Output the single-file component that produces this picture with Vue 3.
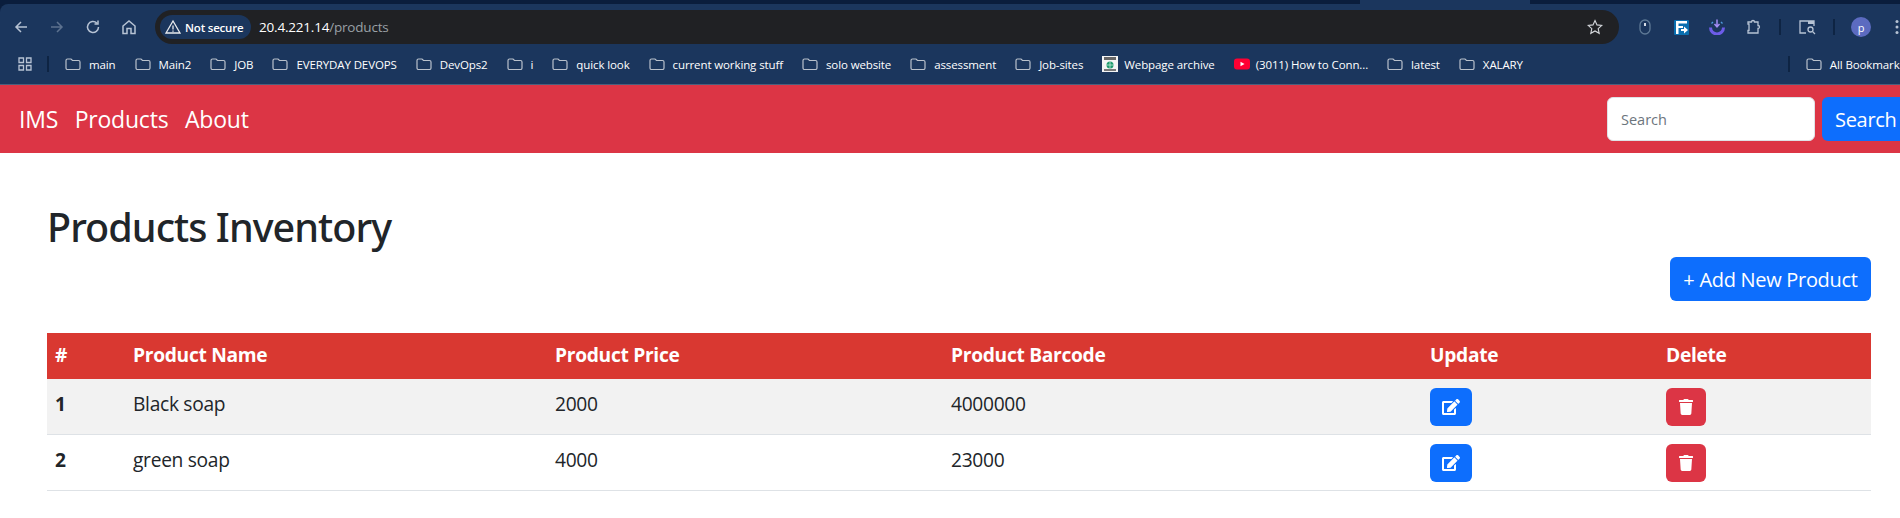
<template>
  <div class="page">
    <div class="chrome">
      <div class="tabstrip">
        <span class="active-tab"></span>
      </div>
      <div class="toolbar">
        <svg class="tb-icon back" viewBox="0 0 16 16"><path d="M14 8H3M8 3 3 8l5 5" /></svg>
        <svg class="tb-icon forward" viewBox="0 0 16 16"><path d="M2 8h11M8 3l5 5-5 5" /></svg>
        <svg class="tb-icon reload" viewBox="0 0 16 16"><path d="M13.500 8A5.500 5.500 0 1 1 11.800 4M13 1.500V5H9.500" /></svg>
        <svg class="tb-icon home" viewBox="0 0 16 16"><path d="M2 7l6-5 6 5v7.500h-4v-5H6v5H2z" /></svg>
        <div class="omnibox">
          <div class="secure">
            <svg class="warn" viewBox="0 0 16 16"><path d="M8 2 1 14h14zM8 6.500v4M8 11.500v1.200" /></svg>
            <span>Not secure</span>
          </div>
          <span class="host">20.4.221.14</span><span class="path">/products</span>
          <svg class="star" viewBox="0 0 16 16"><path d="m8 1.500 2 4.400 4.800.5-3.600 3.200 1 4.700L8 11.900l-4.200 2.400 1-4.700L1.200 6.400 6 5.900z" /></svg>
        </div>
        <div class="extensions">
          <svg class="ext mouse" viewBox="0 0 12 16"><rect x="1" y="1" width="10" height="14" rx="5" /><path class="mouse-dot" d="M6 4v3" /></svg>
          <svg class="ext flag" viewBox="0 0 15 15"><rect width="15" height="15" rx="1" fill="#0a6fb0" /><path d="M2 1h11v2.500H4.500V6H9v2H4.500v6H2z" fill="#fff" /><path d="M7 9h3V6.500l4 3.500-4 3.500V11H7z" fill="#fff" /></svg>
          <svg class="ext power" viewBox="0 0 16 16"><path class="power-ring" d="M1.500 8.500a6.500 6.500 0 0 0 13 0" /><path class="power-arrow" d="M8 .5v7M5.500 5 8 7.800 10.500 5" /><path class="power-top" d="M2.500 4.500 4 3M13.500 4.500 12 3" /></svg>
          <svg class="ext puzzle" viewBox="0 0 16 16"><path d="M2 3h3.500a1.500 1.500 0 0 1 3 0H12v3.500a1.500 1.500 0 0 1 0 3V14H2v-2.500h1V5H2z" /></svg>
          <span class="tb-sep"></span>
          <svg class="ext tabsearch" viewBox="0 0 17 16"><path d="M7 14H1V2h14v5" /><path class="tab-fill" d="M9 2h6v3H9z" /><circle cx="11.500" cy="10.500" r="2.500" /><path d="m13.500 12.500 2.500 2.500" /></svg>
          <span class="tb-sep second"></span>
          <span class="avatar">p</span>
          <svg class="dots" viewBox="0 0 4 16"><circle cx="2" cy="2.500" r="1.500" /><circle cx="2" cy="8" r="1.500" /><circle cx="2" cy="13.500" r="1.500" /></svg>
        </div>
      </div>
      <div class="bookmarks">
        <svg class="apps" viewBox="0 0 14 14"><path d="M1 1h4.500v4.500H1zM8.500 1H13v4.500H8.500zM1 8.500h4.500V13H1zM8.500 8.500H13V13H8.500z" /></svg>
        <span class="bm-sep"></span>
        <div v-for="item in bookmarks" :key="item.label" class="bookmark">
          <svg v-if="item.icon === 'folder'" class="folder" viewBox="0 0 16 12"><path d="M1 2.500A1.500 1.500 0 0 1 2.500 1H6l1.500 1.500h6A1.500 1.500 0 0 1 15 4v6a1.500 1.500 0 0 1-1.500 1.500h-11A1.500 1.500 0 0 1 1 10z" /></svg>
          <svg v-else-if="item.icon === 'archive'" class="favicon" viewBox="0 0 16 16"><rect width="16" height="16" fill="#f4f4f4" /><rect x="2" y="1" width="12" height="3" fill="#666" /><rect x="2" y="13" width="12" height="2" fill="#777" /><circle cx="8" cy="9" r="3.500" fill="#1c9a6c" /><path d="M4.500 9h7M8 5.500v7" stroke="#d8f0e6" stroke-width=".7" /></svg>
          <svg v-else class="favicon" viewBox="0 0 16 16"><rect y="2.500" width="16" height="11" rx="3" fill="#ff0033" /><path d="m6.500 5.800 4 2.200-4 2.200z" fill="#fff" /></svg>
          <span>{{ item.label }}</span>
        </div>
        <span class="bm-sep end"></span>
        <div class="bookmark all">
          <svg class="folder" viewBox="0 0 16 12"><path d="M1 2.500A1.500 1.500 0 0 1 2.500 1H6l1.500 1.500h6A1.500 1.500 0 0 1 15 4v6a1.500 1.500 0 0 1-1.500 1.500h-11A1.500 1.500 0 0 1 1 10z" /></svg>
          <span>All Bookmarks</span>
        </div>
      </div>
    </div>

    <nav class="navbar">
      <a class="nav-link">IMS</a>
      <a class="nav-link">Products</a>
      <a class="nav-link">About</a>
      <form class="search" @submit.prevent>
        <input class="search-input" type="text" placeholder="Search" />
        <button class="btn search-btn">Search</button>
      </form>
    </nav>

    <main class="content">
      <h1>Products Inventory</h1>
      <div class="actions">
        <button class="btn add-btn">+ Add New Product</button>
      </div>
      <table>
        <colgroup>
          <col class="c-num" />
          <col class="c-name" />
          <col class="c-price" />
          <col class="c-code" />
          <col class="c-update" />
          <col class="c-delete" />
        </colgroup>
        <thead>
          <tr>
            <th>#</th>
            <th>Product Name</th>
            <th>Product Price</th>
            <th>Product Barcode</th>
            <th>Update</th>
            <th>Delete</th>
          </tr>
        </thead>
        <tbody>
          <tr v-for="(product, index) in products" :key="product.name">
            <th>{{ index + 1 }}</th>
            <td>{{ product.name }}</td>
            <td>{{ product.price }}</td>
            <td>{{ product.barcode }}</td>
            <td class="btn-cell">
              <button class="icon-btn edit">
                <svg viewBox="0 0 576 512"><path d="M402.600 83.200l90.200 90.200c3.800 3.800 3.800 10 0 13.800L274.400 405.600l-92.800 10.300c-12.400 1.400-22.900-9.100-21.500-21.500l10.300-92.800L388.800 83.200c3.800-3.800 10-3.800 13.800 0zm162-22.900l-48.800-48.800c-15.200-15.200-39.900-15.200-55.200 0l-35.400 35.400c-3.800 3.800-3.800 10 0 13.800l90.200 90.200c3.800 3.800 10 3.800 13.800 0l35.400-35.400c15.200-15.300 15.200-40 0-55.200zM384 346.200V448H64V128h229.800c3.200 0 6.200-1.300 8.500-3.500l40-40c7.600-7.600 2.200-20.500-8.500-20.500H48C21.500 64 0 85.500 0 112v352c0 26.500 21.500 48 48 48h352c26.500 0 48-21.500 48-48V306.200c0-10.700-12.900-16-20.500-8.500l-40 40c-2.200 2.300-3.500 5.300-3.500 8.500z" /></svg>
              </button>
            </td>
            <td class="btn-cell">
              <button class="icon-btn remove">
                <svg viewBox="0 0 448 512"><path d="M432 32H312l-9.400-18.700A24 24 0 0 0 281.100 0H166.800a23.720 23.720 0 0 0-21.400 13.300L136 32H16A16 16 0 0 0 0 48v32a16 16 0 0 0 16 16h416a16 16 0 0 0 16-16V48a16 16 0 0 0-16-16zM53.200 467a48 48 0 0 0 47.900 45h245.800a48 48 0 0 0 47.900-45L416 128H32z" /></svg>
              </button>
            </td>
          </tr>
        </tbody>
      </table>
    </main>
  </div>
</template>

<script setup>
const bookmarks = [
  { label: "main", icon: "folder" },
  { label: "Main2", icon: "folder" },
  { label: "JOB", icon: "folder" },
  { label: "EVERYDAY DEVOPS", icon: "folder" },
  { label: "DevOps2", icon: "folder" },
  { label: "i", icon: "folder" },
  { label: "quick look", icon: "folder" },
  { label: "current working stuff", icon: "folder" },
  { label: "solo website", icon: "folder" },
  { label: "assessment", icon: "folder" },
  { label: "Job-sites", icon: "folder" },
  { label: "Webpage archive", icon: "archive" },
  { label: "(3011) How to Conn...", icon: "youtube" },
  { label: "latest", icon: "folder" },
  { label: "XALARY", icon: "folder" },
];

const products = [
  { name: "Black soap", price: 2000, barcode: 4000000 },
  { name: "green soap", price: 4000, barcode: 23000 },
];
</script>

<style>
html,
body {
  margin: 0;
  background: #fff;
  overflow: hidden;
}
</style>

<style scoped>
.page {
  width: 1900px;
  height: 518px;
  overflow: hidden;
  font-family: "Open Sans", "Noto Sans", sans-serif;
  color: #212529;
}

/* browser frame */
.chrome {
  background: #0a1d3c;
  color: #fff;
}

.tabstrip {
  height: 4px;
  display: flex;
}

.active-tab {
  width: 170px;
  height: 4px;
  margin-left: 1360px;
  background: #1b365d;
}

.toolbar {
  height: 40px;
  box-sizing: border-box;
  padding-top: 6px;
  display: flex;
  align-items: center;
  background: #1b365d;
  border-top-left-radius: 8px;
}

.tb-icon {
  width: 16px;
  height: 16px;
  fill: none;
  stroke: #b7c3d4;
  stroke-width: 1.500;
}

.back {
  margin-left: 13px;
}

.forward {
  margin-left: 20px;
  stroke: #5d728f;
}

.reload {
  margin-left: 20px;
}

.home {
  margin-left: 20px;
}

.omnibox {
  width: 1464px;
  height: 34px;
  margin-left: 18px;
  box-sizing: border-box;
  padding: 0 16px 0 5px;
  display: flex;
  align-items: center;
  background: #202124;
  border-radius: 17px;
  font-size: 13.500px;
  letter-spacing: -0.2px;
}

.secure {
  width: 91px;
  height: 24px;
  display: flex;
  align-items: center;
  margin-right: 8px;
  background: #1b365d;
  border-radius: 12px;
  font-size: 11.500px;
  font-weight: 600;
}

.warn {
  width: 16px;
  height: 16px;
  margin: 0 4px 0 5px;
  fill: none;
  stroke: #e8eaed;
  stroke-width: 1.300;
}

.host {
  color: #fff;
}

.path {
  color: #9aa0a6;
}

.star {
  width: 16px;
  height: 16px;
  margin-left: auto;
  fill: none;
  stroke: #d5d8dc;
  stroke-width: 1.100;
}

.extensions {
  display: flex;
  align-items: center;
}

.ext {
  fill: none;
  stroke: #b7c3d4;
  stroke-width: 1.300;
}

.mouse {
  width: 12px;
  height: 16px;
  margin-left: 20px;
  stroke: #5f7a96;
}

.mouse-dot {
  stroke: #d5dde6;
  stroke-width: 2;
}

.flag {
  width: 15px;
  height: 15px;
  margin-left: 23px;
  stroke: none;
}

.power {
  width: 16px;
  height: 16px;
  margin-left: 20px;
}

.power-ring {
  stroke: #6d5ce8;
  stroke-width: 3;
}

.power-arrow {
  stroke: #a48cf5;
  stroke-width: 1.500;
}

.power-top {
  stroke: #4f9be0;
}

.puzzle {
  width: 16px;
  height: 16px;
  margin-left: 21px;
}

.tb-sep {
  width: 2px;
  height: 16px;
  margin-left: 17px;
  background: #0e2443;
}

.tabsearch {
  width: 17px;
  height: 16px;
  margin-left: 18px;
}

.tab-fill {
  fill: #b7c3d4;
  stroke: none;
}

.tb-sep.second {
  margin-left: 17px;
}

.avatar {
  width: 20px;
  height: 20px;
  margin-left: 16px;
  display: flex;
  align-items: center;
  justify-content: center;
  border-radius: 50%;
  background: #5c6bc0;
  font-size: 11px;
  line-height: 1;
}

.dots {
  width: 4px;
  height: 16px;
  margin-left: 24px;
  fill: #b7c3d4;
}

.bookmarks {
  height: 41px;
  display: flex;
  align-items: center;
  background: #1b365d;
  border-bottom: 1px solid #4b5f7d;
  box-sizing: border-box;
  font-size: 11.500px;
  letter-spacing: -0.11px;
  white-space: nowrap;
}

.apps {
  width: 14px;
  height: 14px;
  margin-left: 18px;
  fill: none;
  stroke: #b7c3d4;
  stroke-width: 1.300;
}

.bm-sep {
  width: 2px;
  height: 16px;
  margin: 0 16px 0 15px;
  background: #0e2443;
  flex-shrink: 0;
}

.bm-sep.end {
  margin: 0 16px 0 auto;
}

.bookmark {
  display: flex;
  align-items: center;
  gap: 8px;
  margin-right: 19px;
  flex-shrink: 0;
}

.bookmark.all {
  margin-right: -5px;
}

.folder {
  width: 16px;
  height: 12px;
  fill: none;
  stroke: #b9c1cc;
  stroke-width: 1.200;
}

.favicon {
  width: 16px;
  height: 16px;
  margin-right: -2px;
}

/* app navbar */
.navbar {
  height: 68px;
  display: flex;
  align-items: center;
  padding-left: 19px;
  gap: 16.500px;
  background: #dc3545;
}

.nav-link {
  color: #fff;
  font-size: 23px;
  letter-spacing: -0.2px;
}

.search {
  display: flex;
  gap: 7px;
  margin-left: auto;
  margin-right: -8px;
}

.search-input {
  width: 208px;
  height: 44px;
  box-sizing: border-box;
  padding: 0 13px;
  border: 1px solid #dee2e6;
  border-radius: 6px;
  background: #fff;
  font: inherit;
  font-size: 14.500px;
}

.search-input::placeholder {
  color: #6c757d;
}

.btn {
  border: 0;
  background: #0d6efd;
  color: #fff;
  font-family: inherit;
  font-size: 20px;
  letter-spacing: -0.3px;
  border-radius: 6px;
}

.search-btn {
  width: 86px;
  height: 44px;
  padding: 0 13px;
  text-align: left;
}

/* page body */
.content {
  padding: 50px 29px 0 47px;
}

h1 {
  margin: 0;
  font-family: "Noto Sans", "Open Sans", sans-serif;
  font-size: 39.500px;
  font-weight: 500;
  line-height: 48px;
  letter-spacing: -0.95px;
}

.actions {
  display: flex;
  justify-content: flex-end;
  margin: 6px 0 32px;
}

.add-btn {
  width: 201px;
  height: 44px;
  padding: 0;
}

table {
  width: 100%;
  table-layout: fixed;
  border-collapse: collapse;
  font-size: 19.200px;
  line-height: 1.5;
  letter-spacing: -0.3px;
}

.c-num { width: 78px; }
.c-name { width: 422px; }
.c-price { width: 396px; }
.c-code { width: 479px; }
.c-update { width: 236px; }
.c-delete { width: 213px; }

th,
td {
  padding: 8px;
  text-align: left;
  vertical-align: middle;
}

tbody th,
tbody td {
  padding: 6px 8px 9px;
}

tbody .btn-cell {
  padding: 9px 8px 8px;
}

thead tr {
  border-bottom: 1px solid #d93831;
}

thead th {
  background: #d93831;
  color: #fff;
}

tbody tr {
  border-bottom: 1px solid #dee2e6;
}

tbody tr:nth-child(odd) {
  background: #f2f2f2;
}

.icon-btn {
  height: 38px;
  display: flex;
  align-items: center;
  justify-content: center;
  padding: 0;
  border: 0;
  border-radius: 6px;
}

.icon-btn svg {
  height: 16px;
  fill: #fff;
}

.edit {
  width: 42px;
  background: #0d6efd;
}

.edit svg {
  width: 18px;
}

.remove {
  width: 40px;
  background: #dc3545;
}

.remove svg {
  width: 14px;
}
</style>
